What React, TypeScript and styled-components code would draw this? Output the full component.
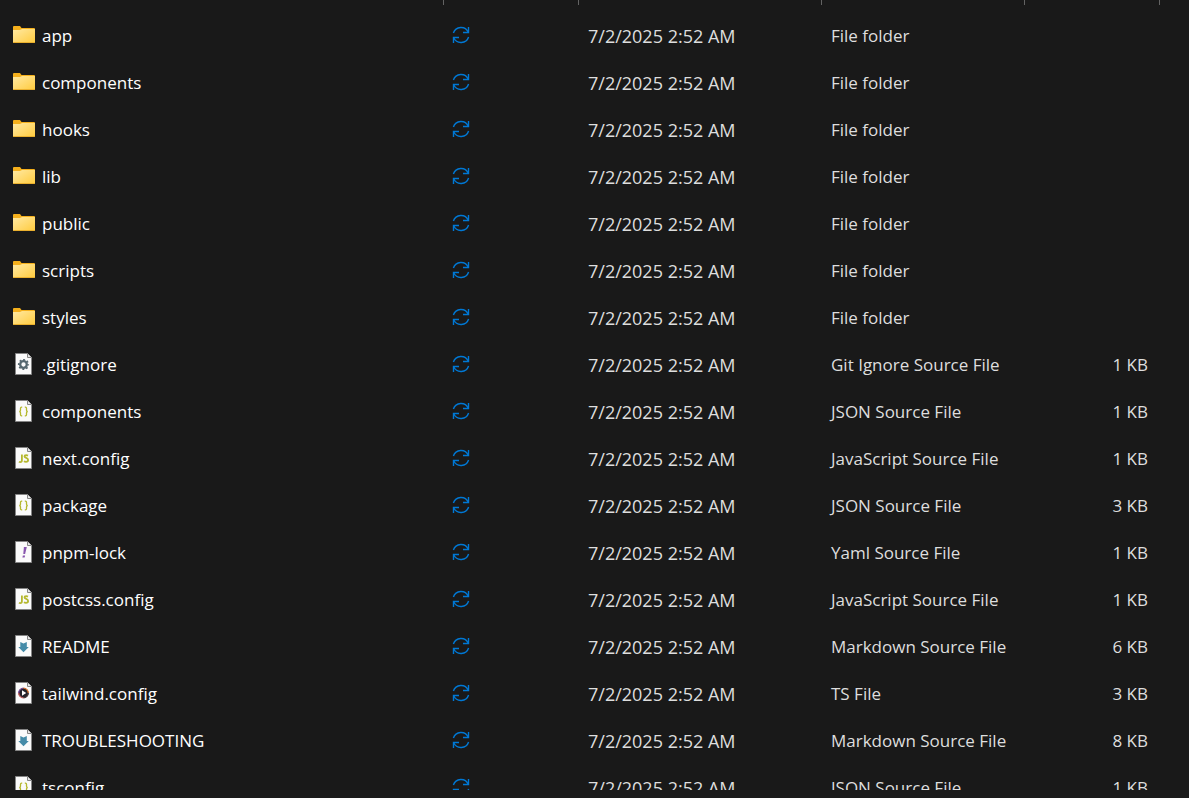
import React from "react";
import styled, { createGlobalStyle } from "styled-components";

type Kind = "folder" | "git" | "json" | "js" | "yaml" | "markdown" | "ts";

interface Entry {
  name: string;
  kind: Kind;
  size?: string;
}

const typeNames: Record<Kind, string> = {
  folder: "File folder",
  git: "Git Ignore Source File",
  json: "JSON Source File",
  js: "JavaScript Source File",
  yaml: "Yaml Source File",
  markdown: "Markdown Source File",
  ts: "TS File",
};

const modified = "7/2/2025 2:52 AM";

const entries: Entry[] = [
  { name: "app", kind: "folder" },
  { name: "components", kind: "folder" },
  { name: "hooks", kind: "folder" },
  { name: "lib", kind: "folder" },
  { name: "public", kind: "folder" },
  { name: "scripts", kind: "folder" },
  { name: "styles", kind: "folder" },
  { name: ".gitignore", kind: "git", size: "1 KB" },
  { name: "components", kind: "json", size: "1 KB" },
  { name: "next.config", kind: "js", size: "1 KB" },
  { name: "package", kind: "json", size: "3 KB" },
  { name: "pnpm-lock", kind: "yaml", size: "1 KB" },
  { name: "postcss.config", kind: "js", size: "1 KB" },
  { name: "README", kind: "markdown", size: "6 KB" },
  { name: "tailwind.config", kind: "ts", size: "3 KB" },
  { name: "TROUBLESHOOTING", kind: "markdown", size: "8 KB" },
  { name: "tsconfig", kind: "json", size: "1 KB" },
];

const GlobalStyle = createGlobalStyle`
  * { box-sizing: border-box; }
  body {
    margin: 0;
    background: #191919;
    font-family: "Segoe UI", "Open Sans", "Noto Sans", sans-serif;
  }
`;

const Explorer = styled.div`
  display: flex;
  flex-direction: column;
  height: 100vh;
  background: #191919;
`;

const ListPane = styled.main`
  flex: 1;
  min-height: 0;
  overflow: hidden;
`;

const StatusEdge = styled.footer`
  height: 8px;
  flex: none;
  background: #1c1c1c;
`;

const FileTable = styled.table`
  width: 100%;
  table-layout: fixed;
  border-collapse: separate;
  border-spacing: 0;
  font-size: 17px;
  line-height: 24px;
`;

const Column = styled.col<{ $width?: number }>`
  width: ${(p) => (p.$width ? `${p.$width}px` : "auto")};
`;

const HeaderCell = styled.th`
  height: 5px;
  padding: 0;
  border-right: 1px solid #636363;

  &:last-child {
    border-right: 0;
  }
`;

const HeaderGap = styled.tbody`
  td {
    height: 7px;
    padding: 0;
  }
`;

const Cell = styled.td`
  height: 47px;
  padding: 0 12px 0 9px;
  vertical-align: middle;
  white-space: nowrap;
  color: #dedede;
`;

const NameCell = styled(Cell)`
  padding-left: 12px;
  color: #ffffff;
`;

const StatusCell = styled(Cell)`
  padding-left: 5px;
`;

const DateCell = styled(Cell)`
  font-size: 18px;
`;

const SizeCell = styled(Cell)`
  text-align: right;
`;

const NameLine = styled.div`
  display: flex;
  align-items: center;
  gap: 6px;
`;

const Icon = styled.svg`
  display: block;
  flex: none;
  width: 24px;
  height: 24px;
  margin-bottom: 1px;
`;

const PageIcon = styled(Icon)`
  margin-bottom: 3px;
`;

const FolderIcon = () => (
  <Icon viewBox="0 0 24 24" aria-hidden="true">
    <defs>
      <linearGradient id="folderFront" x1="0" y1="0" x2="1" y2="1">
        <stop offset="0" stopColor="#ffe9a3" />
        <stop offset="1" stopColor="#ffcb3d" />
      </linearGradient>
    </defs>
    <path d="M1 4q0-1 1-1h6l1.5 2H22q1 0 1 1v6H1z" fill="#f5b01c" />
    <path d="M1 7h7l2-1h13v13q0 1-1 1H2q-1 0-1-1z" fill="url(#folderFront)" />
    <path d="M1 19h22q0 1-1 1H2q-1 0-1-1z" fill="#eab02e" />
  </Icon>
);

const marks: Record<Exclude<Kind, "folder">, React.ReactNode> = {
  git: (
    <g fill="none" stroke="#55676f">
      <circle cx="11.5" cy="13.5" r="3.3" strokeWidth="2.3" />
      <circle
        cx="11.5"
        cy="13.5"
        r="4.8"
        strokeWidth="1.6"
        strokeDasharray="1.9 1.87"
        strokeDashoffset="0.95"
      />
    </g>
  ),
  json: (
    <g fill="none" stroke="#b5b82e" strokeWidth="1.3">
      <path d="M10.2 9.2h-.6q-1.1 0-1.1 1.1v2q0 1.2-1.3 1.2 1.3 0 1.3 1.2v2q0 1.1 1.1 1.1h.6" />
      <path d="M12.8 9.2h.6q1.1 0 1.1 1.1v2q0 1.2 1.3 1.2-1.3 0-1.3 1.2v2q0 1.1-1.1 1.1h-.6" />
    </g>
  ),
  js: (
    <g fill="none" stroke="#b5b82e" strokeWidth="1.8">
      <path d="M9.9 9.5v5.8q0 1.8-1.6 1.8-.8 0-1.4-.3" />
      <path d="M16 10.6q-.9-.5-1.9-.5-1.6 0-1.6 1.2 0 1 1.7 1.6 1.9.7 1.9 2.1 0 1.9-2.1 1.9-1.1 0-2.1-.6" />
    </g>
  ),
  yaml: (
    <g fill="#8856ae">
      <path d="M11.9 8h2.9l-1.7 7h-1.8z" />
      <path d="M10.9 16.4h2.2l-.5 2.1h-2.2z" />
    </g>
  ),
  markdown: (
    <path d="M8.3 9l3.2 1.6L14.8 9v5h2l-5.3 5.2L6.3 14h2z" fill="#458ba8" />
  ),
  ts: (
    <g>
      <circle cx="11.5" cy="13" r="5" fill="#242229" />
      <path d="M6.7 13a4.8 4.8 0 0 1 4.8-4.8" fill="none" stroke="#7b4b9c" strokeWidth="1.3" />
      <path d="M11.5 8.2a4.8 4.8 0 0 1 4.8 4.8" fill="none" stroke="#d8742e" strokeWidth="1.3" />
      <path d="M16.3 13a4.8 4.8 0 0 1-4.8 4.8" fill="none" stroke="#4b3a3a" strokeWidth="1.3" />
      <path d="M11.5 17.8A4.8 4.8 0 0 1 6.7 13" fill="none" stroke="#c25b5b" strokeWidth="1.3" />
      <path d="M10 10.3l4.2 2.7-4.2 2.7z" fill="#fff" />
    </g>
  ),
};

const DocumentIcon = ({ kind }: { kind: Exclude<Kind, "folder"> }) => (
  <PageIcon viewBox="0 0 24 24" aria-hidden="true">
    <path d="M3.5 2.5h12l4 4v17h-16z" fill="#fafafa" stroke="#858585" />
    <path d="M15.5 2.5v4h4" fill="#e6e6e6" stroke="#858585" />
    {marks[kind]}
  </PageIcon>
);

const SyncIcon = () => (
  <Icon viewBox="0 0 24 24" role="img" aria-label="Sync pending">
    <g fill="none" stroke="#0078d4" strokeWidth="1.4">
      <path d="M4.4 10A8 8 0 0 1 19.3 9.2" />
      <path d="M19.5 4v5.5H14" />
      <path d="M19.6 14A8 8 0 0 1 4.7 14.8" />
      <path d="M4.5 20v-5.5H10" />
    </g>
  </Icon>
);

export default function App() {
  return (
    <Explorer>
      <GlobalStyle />
      <ListPane>
        <FileTable>
          <colgroup>
            <Column />
            <Column $width={135} />
            <Column $width={243} />
            <Column $width={203} />
            <Column $width={135} />
            <Column $width={29} />
          </colgroup>
          <thead>
            <tr>
              <HeaderCell scope="col" aria-label="Name" />
              <HeaderCell scope="col" aria-label="Status" />
              <HeaderCell scope="col" aria-label="Date modified" />
              <HeaderCell scope="col" aria-label="Type" />
              <HeaderCell scope="col" aria-label="Size" />
              <HeaderCell as="td" />
            </tr>
          </thead>
          <HeaderGap>
            <tr>
              <td colSpan={6} />
            </tr>
          </HeaderGap>
          <tbody>
            {entries.map((entry) => (
              <tr key={`${entry.kind}-${entry.name}`}>
                <NameCell>
                  <NameLine>
                    {entry.kind === "folder" ? (
                      <FolderIcon />
                    ) : (
                      <DocumentIcon kind={entry.kind} />
                    )}
                    <span>{entry.name}</span>
                  </NameLine>
                </NameCell>
                <StatusCell>
                  <SyncIcon />
                </StatusCell>
                <DateCell>{modified}</DateCell>
                <Cell>{typeNames[entry.kind]}</Cell>
                <SizeCell>{entry.size}</SizeCell>
                <Cell />
              </tr>
            ))}
          </tbody>
        </FileTable>
      </ListPane>
      <StatusEdge />
    </Explorer>
  );
}
